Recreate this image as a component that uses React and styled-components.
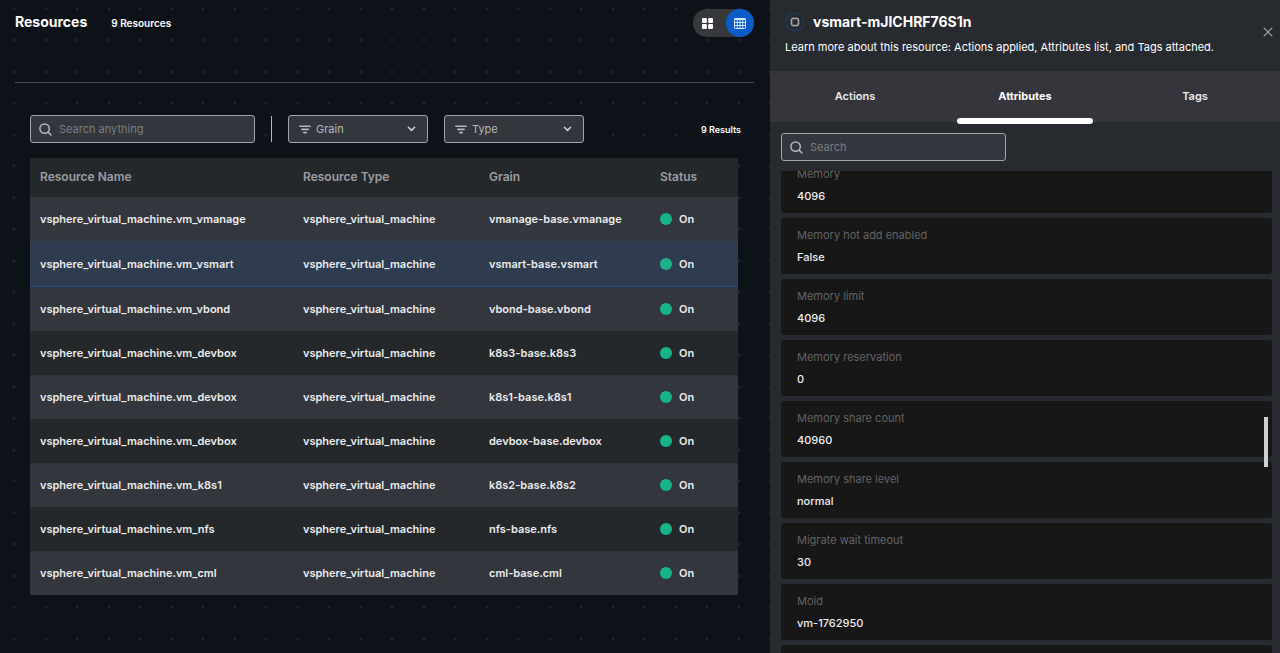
// App.jsx
import { useLayoutEffect, useRef, useState } from 'react';
import styled, { createGlobalStyle } from 'styled-components';

const resources = [
  { name: 'vsphere_virtual_machine.vm_vmanage', grain: 'vmanage-base.vmanage' },
  { name: 'vsphere_virtual_machine.vm_vsmart', grain: 'vsmart-base.vsmart' },
  { name: 'vsphere_virtual_machine.vm_vbond', grain: 'vbond-base.vbond' },
  { name: 'vsphere_virtual_machine.vm_devbox', grain: 'k8s3-base.k8s3' },
  { name: 'vsphere_virtual_machine.vm_devbox', grain: 'k8s1-base.k8s1' },
  { name: 'vsphere_virtual_machine.vm_devbox', grain: 'devbox-base.devbox' },
  { name: 'vsphere_virtual_machine.vm_k8s1', grain: 'k8s2-base.k8s2' },
  { name: 'vsphere_virtual_machine.vm_nfs', grain: 'nfs-base.nfs' },
  { name: 'vsphere_virtual_machine.vm_cml', grain: 'cml-base.cml' },
];

const attributes = [
  { label: 'Memory', value: '4096' },
  { label: 'Memory hot add enabled', value: 'False' },
  { label: 'Memory limit', value: '4096' },
  { label: 'Memory reservation', value: '0' },
  { label: 'Memory share count', value: '40960' },
  { label: 'Memory share level', value: 'normal' },
  { label: 'Migrate wait timeout', value: '30' },
  { label: 'Moid', value: 'vm-1762950' },
  { label: '', value: '' },
];

const tabs = ['Actions', 'Attributes', 'Tags'];

const SearchIcon = () => (
  <svg width="13" height="13" viewBox="0 0 13 13" fill="none" stroke="#b4b7bb" strokeWidth="1.5" strokeLinecap="round">
    <circle cx="5.6" cy="5.6" r="4.7" />
    <path d="M9.1 9.1L12 12" />
  </svg>
);

const FilterIcon = () => (
  <svg width="12" height="9" viewBox="0 0 12 9" fill="none" stroke="#b4b7bb" strokeWidth="1.6" strokeLinecap="round">
    <path d="M0.9 1.2H11.1M2.9 4.4H9.1M4.8 7.6H7.2" />
  </svg>
);

const ChevronIcon = () => (
  <svg width="9" height="6" viewBox="0 0 9 6" fill="none" stroke="#c9cbce" strokeWidth="1.6" strokeLinecap="round" strokeLinejoin="round">
    <path d="M1.4 1.3L4.5 4.4L7.6 1.3" />
  </svg>
);

const CardsIcon = () => (
  <svg width="11" height="11" viewBox="0 0 11 11" fill="#fff">
    <rect width="4.9" height="4.9" rx="1" />
    <rect x="6.1" width="4.9" height="4.9" rx="1" />
    <rect y="6.1" width="4.9" height="4.9" rx="1" />
    <rect x="6.1" y="6.1" width="4.9" height="4.9" rx="1" />
  </svg>
);

const TableIcon = () => (
  <svg width="12" height="11" viewBox="0 0 12 11" fill="none" stroke="#dfeaf8">
    <rect x="0.5" y="0.5" width="11" height="10" rx="0.8" />
    <path d="M0.5 1.2H11.5" strokeWidth="1.4" />
    <path d="M0.5 4.5H11.5M0.5 7.5H11.5M3.3 1V10.5M6 1V10.5M8.7 1V10.5" strokeWidth="0.9" />
  </svg>
);

const ChipIcon = () => (
  <svg width="20" height="20" viewBox="0 0 20 20" fill="none">
    <circle cx="10" cy="10" r="9" stroke="#1c3d68" strokeWidth="1.2" />
    <rect x="6.6" y="6.6" width="6.8" height="6.8" rx="1.2" stroke="#a7a9ac" strokeWidth="1.5" />
    <path d="M8.5 5.2V6M11.5 5.2V6M8.5 14V14.8M11.5 14V14.8M5.2 8.5H6M5.2 11.5H6M14 8.5H14.8M14 11.5H14.8" stroke="#8b8e92" strokeWidth="0.7" />
  </svg>
);

const CloseIcon = () => (
  <svg width="10" height="10" viewBox="0 0 10 10" fill="none" stroke="#a9abae" strokeWidth="1.2">
    <path d="M0.8 0.8L9.2 9.2M9.2 0.8L0.8 9.2" />
  </svg>
);

function FilterSelect({ label }) {
  return (
    <SelectField>
      <FilterIcon />
      <Select aria-label={label}>
        <option>{label}</option>
      </Select>
      <ChevronIcon />
    </SelectField>
  );
}

function ResourceTable() {
  const [selected, setSelected] = useState(1);

  return (
    <Table>
      <colgroup>
        <Col $width={263} />
        <Col $width={186} />
        <Col $width={171} />
        <Col $width={88} />
      </colgroup>
      <thead>
        <tr>
          <HeadCell>Resource Name</HeadCell>
          <HeadCell>Resource Type</HeadCell>
          <HeadCell>Grain</HeadCell>
          <HeadCell>Status</HeadCell>
        </tr>
      </thead>
      <tbody>
        {resources.map((item, index) => (
          <Row key={index} $selected={index === selected} onClick={() => setSelected(index)}>
            <Cell>{item.name}</Cell>
            <Cell>vsphere_virtual_machine</Cell>
            <Cell>{item.grain}</Cell>
            <Cell>
              <Status>On</Status>
            </Cell>
          </Row>
        ))}
      </tbody>
    </Table>
  );
}

function DetailsPanel() {
  const [activeTab, setActiveTab] = useState('Attributes');
  const listRef = useRef(null);

  useLayoutEffect(() => {
    listRef.current.scrollTop = 14;
  }, []);

  return (
    <Panel>
      <PanelHeader>
        <PanelInfo>
          <PanelTitleRow>
            <ChipIcon />
            <PanelTitle>vsmart-mJlCHRF76S1n</PanelTitle>
          </PanelTitleRow>
          <PanelText>Learn more about this resource: Actions applied, Attributes list, and Tags attached.</PanelText>
        </PanelInfo>
        <CloseButton type="button" aria-label="Close">
          <CloseIcon />
        </CloseButton>
      </PanelHeader>
      <TabList role="tablist">
        {tabs.map((tab) => (
          <Tab
            key={tab}
            type="button"
            role="tab"
            aria-selected={tab === activeTab}
            $active={tab === activeTab}
            onClick={() => setActiveTab(tab)}
          >
            {tab}
          </Tab>
        ))}
      </TabList>
      <PanelBody>
        <SearchField>
          <SearchIcon />
          <SearchInput type="text" placeholder="Search" aria-label="Search" />
        </SearchField>
        <ListFrame>
          <AttributeList ref={listRef}>
            {attributes.map((item, index) => (
              <AttributeCard key={index}>
                <AttributeLabel>{item.label}</AttributeLabel>
                <AttributeValue>{item.value}</AttributeValue>
              </AttributeCard>
            ))}
          </AttributeList>
          <ScrollThumb />
        </ListFrame>
      </PanelBody>
    </Panel>
  );
}

function App() {
  return (
    <>
      <GlobalStyle />
      <Page>
        <Main>
          <Header>
            <Title>Resources</Title>
            <Count>9 Resources</Count>
            <ViewToggle>
              <ViewButton type="button" aria-label="Cards">
                <CardsIcon />
              </ViewButton>
              <ViewButton type="button" aria-label="Table" $active>
                <TableIcon />
              </ViewButton>
            </ViewToggle>
          </Header>
          <Content>
            <Toolbar>
              <SearchField>
                <SearchIcon />
                <SearchInput type="text" placeholder="Search anything" aria-label="Search anything" />
              </SearchField>
              <Separator />
              <FilterSelect label="Grain" />
              <FilterSelect label="Type" />
              <Results>9 Results</Results>
            </Toolbar>
            <ResourceTable />
          </Content>
        </Main>
        <DetailsPanel />
      </Page>
    </>
  );
}

export default App;


const GlobalStyle = createGlobalStyle`
  * {
    box-sizing: border-box;
  }

  body {
    margin: 0;
    background: #0d1218;
    color: #fff;
    font-family: Inter, "Noto Sans", sans-serif;
    font-size: 11px;
  }

  button,
  input,
  select {
    font-family: inherit;
  }

  svg {
    display: block;
    flex-shrink: 0;
  }
`;

const Page = styled.div`
  display: grid;
  grid-template-columns: 77fr 51fr;
  grid-template-rows: 100%;
  height: 100vh;
  overflow: hidden;
`;

const Main = styled.main`
  min-width: 0;
  padding: 0 16px 0 15px;
  background-color: #0d1218;
  background-image:
    radial-gradient(circle at 14px 9px, #1f262b 1px, transparent 2px),
    radial-gradient(circle at 46px 9px, #1f262b 1px, transparent 2px),
    radial-gradient(circle at 14px 40px, #1f262b 1px, transparent 2px),
    radial-gradient(circle at 46px 40px, #1f262b 1px, transparent 2px);
  background-size: 63px 63px;
`;

const Header = styled.header`
  display: flex;
  align-items: flex-start;
  height: 83px;
  padding-top: 9px;
  border-bottom: 1px solid #4b4f53;
`;

const Title = styled.h1`
  margin: 0;
  font-size: 14px;
  font-weight: 700;
  line-height: 26px;
`;

const Count = styled.span`
  margin-left: 24px;
  font-size: 10px;
  font-weight: 600;
  line-height: 28px;
`;

const ViewToggle = styled.div`
  display: flex;
  gap: 5px;
  margin-left: auto;
  border-radius: 14px;
  background: #36383c;
`;

const ViewButton = styled.button`
  display: flex;
  align-items: center;
  justify-content: center;
  width: 28px;
  height: 28px;
  padding: 0;
  border: none;
  border-radius: 50%;
  background: ${({ $active }) => ($active ? '#0b5cc6' : 'transparent')};
  cursor: pointer;
`;

const Content = styled.section`
  padding: 32px 16px 0 15px;
`;

const Toolbar = styled.div`
  display: flex;
  align-items: center;
  gap: 16px;
  margin-bottom: 15px;
`;

const SearchField = styled.label`
  display: flex;
  align-items: center;
  gap: 7px;
  width: 225px;
  height: 28px;
  padding: 0 8px;
  border: 1px solid #a3a6a9;
  border-radius: 3px;
  background: #33363c;
`;

const SearchInput = styled.input`
  flex: 1;
  min-width: 0;
  padding: 0;
  border: none;
  outline: none;
  background: transparent;
  color: #fff;
  font-size: 11px;

  &::placeholder {
    color: #7c7f84;
  }
`;

const Separator = styled.div`
  width: 1px;
  height: 26px;
  background: #b5b7b9;
`;

const SelectField = styled.label`
  display: flex;
  align-items: center;
  gap: 5px;
  width: 140px;
  height: 28px;
  padding: 0 11px 0 10px;
  border: 1px solid #a3a6a9;
  border-radius: 3px;
  background: #33363c;
`;

const Select = styled.select`
  flex: 1;
  min-width: 0;
  padding: 0;
  border: none;
  outline: none;
  appearance: none;
  background: transparent;
  color: #b4b7bb;
  font-size: 11px;
`;

const Results = styled.span`
  margin: 0 -3px 0 auto;
  font-size: 9px;
  font-weight: 600;
`;

const Table = styled.table`
  width: 100%;
  table-layout: fixed;
  border-spacing: 0;
  background: #25282b;
`;

const Col = styled.col`
  width: ${({ $width }) => $width}px;
`;

const HeadCell = styled.th`
  height: 39px;
  padding: 0 0 2px 10px;
  color: #9c9da4;
  font-size: 12px;
  font-weight: 600;
  text-align: left;
`;

const Cell = styled.td`
  height: 44px;
  padding: 0 0 0 10px;
  color: #ebeced;
  font-size: 11px;
  font-weight: 600;
  white-space: nowrap;
`;

const Row = styled.tr`
  cursor: pointer;

  &:nth-child(odd) {
    background: #33363c;
  }

  ${({ $selected }) =>
    $selected &&
    `
    && {
      background: #2f3b4f;
    }

    td {
      height: 46px;
      border-top: 1px solid #2f3b4f;
      border-bottom: 1px solid #20508f;
    }
  `}
`;

const Status = styled.span`
  display: flex;
  align-items: center;
  gap: 7px;

  &::before {
    content: '';
    width: 12px;
    height: 12px;
    border-radius: 50%;
    background: #19b389;
  }
`;

const Panel = styled.aside`
  display: flex;
  flex-direction: column;
  min-width: 0;
  background: #272a2f;
`;

const PanelHeader = styled.header`
  display: flex;
  align-items: center;
  justify-content: space-between;
  height: 71px;
  padding: 0 7px 3px 15px;
`;

const PanelInfo = styled.div`
  display: flex;
  flex-direction: column;
  gap: 6px;
`;

const PanelTitleRow = styled.div`
  display: flex;
  align-items: center;
  gap: 8px;
`;

const PanelTitle = styled.h2`
  margin: 0;
  font-size: 14px;
  font-weight: 700;
  line-height: 20px;
`;

const PanelText = styled.p`
  margin: 0;
  font-size: 11px;
  line-height: 18px;
  white-space: nowrap;
`;

const CloseButton = styled.button`
  padding: 0 0 4px;
  border: none;
  background: transparent;
  cursor: pointer;
`;

const TabList = styled.div`
  display: flex;
  height: 51px;
  background: #35353b;
`;

const Tab = styled.button`
  position: relative;
  flex: 1;
  padding: 0 0 2px;
  border: none;
  background: transparent;
  color: ${({ $active }) => ($active ? '#fff' : '#e8e9ea')};
  font-size: 11px;
  font-weight: ${({ $active }) => ($active ? 700 : 600)};
  cursor: pointer;

  &::after {
    content: '';
    display: ${({ $active }) => ($active ? 'block' : 'none')};
    position: absolute;
    right: 10%;
    bottom: -2px;
    left: 10%;
    height: 6px;
    border-radius: 3px;
    background: #fff;
  }
`;

const PanelBody = styled.div`
  display: flex;
  flex: 1;
  flex-direction: column;
  gap: 10px;
  min-height: 0;
  padding: 11px 8px 0 11px;
`;

const ListFrame = styled.div`
  position: relative;
  display: flex;
  flex: 1;
  min-height: 0;
`;

const AttributeList = styled.dl`
  flex: 1;
  margin: 0;
  overflow-y: auto;
  scrollbar-width: none;
`;

const AttributeCard = styled.div`
  display: flex;
  flex-direction: column;
  gap: 4px;
  margin-bottom: 5px;
  padding: 8px 16px;
  border-radius: 3px;
  background: #171717;
`;

const AttributeLabel = styled.dt`
  min-height: 18px;
  color: #626365;
  font-size: 11px;
  line-height: 18px;
`;

const AttributeValue = styled.dd`
  min-height: 18px;
  margin: 0;
  color: #f0f0f0;
  font-size: 11px;
  font-weight: 500;
  line-height: 18px;
`;

/* sits over the cards, half way down the list */
const ScrollThumb = styled.div`
  position: absolute;
  top: 51%;
  right: 4px;
  width: 4px;
  height: 50px;
  background: #d0d0d0;
`;
